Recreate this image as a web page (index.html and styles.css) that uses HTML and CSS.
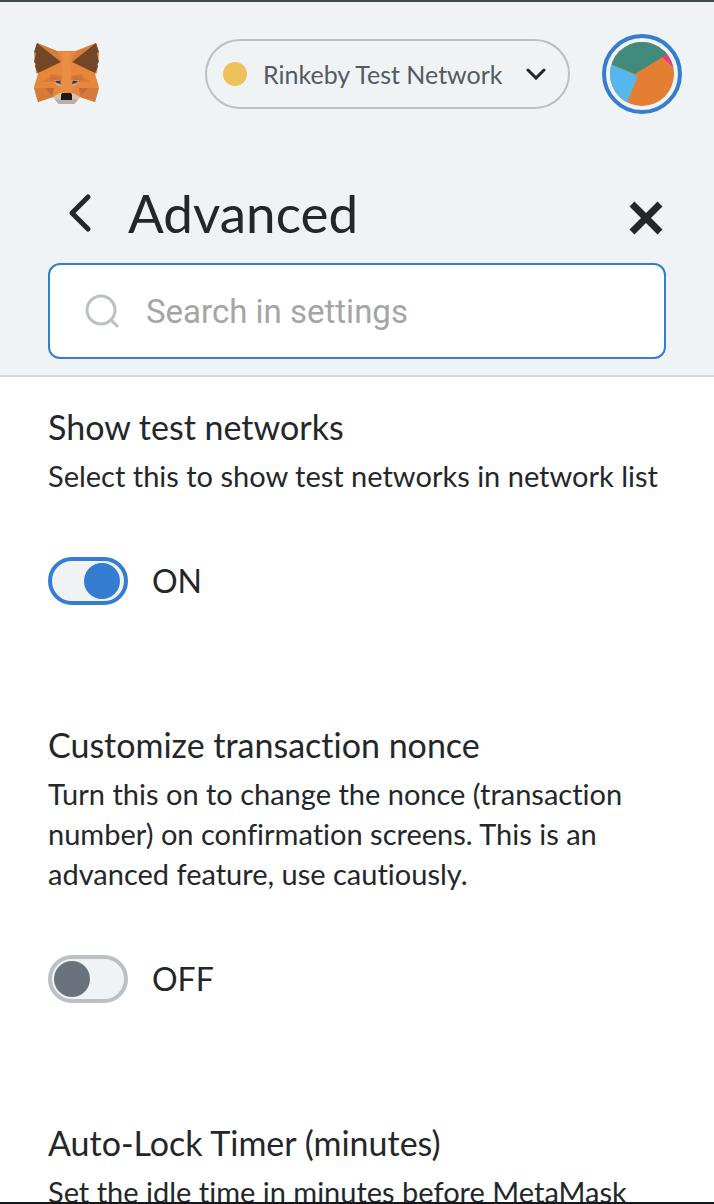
FILE: index.html
```html
<!DOCTYPE html>
<html lang="en">
<head>
<meta charset="utf-8">
<meta name="viewport" content="width=device-width, initial-scale=1">
<title>Advanced settings</title>
<link rel="stylesheet" href="styles.css">
</head>
<body>
<div class="app">
  <header class="top">
    <div class="app-bar">
      <a class="logo" href="#home" aria-label="Home">
        <svg viewBox="0 0 67 62" width="67" height="62" aria-hidden="true">
          <path fill="#e6873c" d="M4 0 24 8h19L63 0l3 10-2 20-2 1 4 13-4 15-15-5-6 7H26l-6-7-15 5-4-15 4-13-2-1L1 10z"/>
          <path fill="#d67a3a" d="M1 45h20l-1 9-15 5zM66 45H46l1 9 15 5z"/>
          <path fill="#d97b39" d="m4 0 20 8 5 11zM63 0 43 8l-5 11z"/>
          <path fill="#734626" d="M4 0 28 19 5 30l-1-2-1-2-1-3 1-2-2-2 2-9-2-1zM63 0 39 19l23 11 1-2 1-2 1-3-1-2 2-2-2-9 2-1z"/>
          <path fill="#e98e45" d="M29 9h9v24l2 17H27l2-17z"/>
          <path fill="#d4773a" d="m18 31-2 4 11 8 2-10zM49 31l2 4-11 8-2-10z"/>
          <path fill="#c66a38" d="m9 39 7-4 9-1 2 2-9 3zM58 39l-7-4-9-1-2 2 9 3z" opacity=".45"/>
          <path fill="#c5683a" d="M12 45h9l-2 8zM55 45h-9l2 8z"/>
          <path fill="#d9a27c" d="m21 37 6 1 1 6-5-2zM46 37l-6 1-1 6 5-2z"/>
          <path fill="#263c55" d="m22 38 5 0 1 3-4-1zM45 38l-5 0-1 3 4-1z"/>
          <path fill="#d6c1b3" d="m20 54 7-4h13l7 4-6 7H26z"/>
          <path fill="#bdaea3" d="m22 57 5-1h13l5 1-4 4H26z"/>
          <path fill="#17191b" d="m29 50h9l1 2v5H28v-5z"/>
        </svg>
      </a>
      <button class="network" type="button">
        <span class="network-dot"></span>
        <span class="network-name">Rinkeby Test Network</span>
        <svg viewBox="0 0 20 12" width="20" height="12" aria-hidden="true"><path d="m2 2 8 8 8-8" fill="none" stroke="#24272a" stroke-width="3" stroke-linecap="round"/></svg>
      </button>
      <button class="account" type="button" aria-label="Account">
        <svg viewBox="0 0 64 64" width="64" height="64" aria-hidden="true">
          <clipPath id="disc"><circle cx="32" cy="32" r="32"/></clipPath>
          <g clip-path="url(#disc)">
            <path fill="#e47e32" d="M0 0h64v64H0z"/>
            <path fill="#ec3a7e" d="M52 15 64 4v22z"/>
            <path fill="#418a7c" d="M0 0h64v8L25 32 0 22z"/>
            <path fill="#55b7ee" d="m0 22 28 12-14 33H0z"/>
          </g>
        </svg>
      </button>
    </div>
    <div class="heading">
      <button class="icon-button" type="button" aria-label="Back">
        <svg viewBox="0 0 24 40" width="24" height="40" aria-hidden="true"><path d="M20 4 4 20l16 16" fill="none" stroke="#24272a" stroke-width="5" stroke-linecap="round" stroke-linejoin="round"/></svg>
      </button>
      <h1 class="title">Advanced</h1>
      <button class="icon-button close" type="button" aria-label="Close">
        <svg viewBox="0 0 34 34" width="34" height="34" aria-hidden="true"><path d="m3 3 28 28M31 3 3 31" stroke="#24272a" stroke-width="7"/></svg>
      </button>
    </div>
    <label class="search">
      <svg viewBox="0 0 36 36" width="36" height="36" aria-hidden="true"><g fill="none" stroke="#bbc0c5" stroke-width="3" stroke-linecap="round"><circle cx="17" cy="17" r="14"/><path d="m27 27 6 6"/></g></svg>
      <input class="search-input" type="search" placeholder="Search in settings" aria-label="Search in settings">
    </label>
  </header>
  <main class="settings">
    <section class="setting">
      <h2 class="setting-title">Show test networks</h2>
      <p class="setting-text">Select this to show test networks in network list</p>
      <label class="toggle"><input class="switch" type="checkbox" role="switch" aria-label="Show test networks" checked><span>ON</span></label>
    </section>
    <section class="setting">
      <h2 class="setting-title">Customize transaction nonce</h2>
      <p class="setting-text">Turn this on to change the nonce (transaction number) on confirmation screens. This is an advanced feature, use cautiously.</p>
      <label class="toggle"><input class="switch" type="checkbox" role="switch" aria-label="Customize transaction nonce"><span>OFF</span></label>
    </section>
    <section class="setting">
      <h2 class="setting-title">Auto-Lock Timer (minutes)</h2>
      <p class="setting-text">Set the idle time in minutes before MetaMask</p>
    </section>
  </main>
</div>
</body>
</html>
```
FILE: styles.css
```css
* {
  box-sizing: border-box;
}

body {
  margin: 0;
  background: #fff;
  color: #24272a;
  font-family: Lato, "Open Sans", sans-serif;
  font-variant-ligatures: none;
}

button {
  padding: 0;
  border: 0;
  background: none;
  color: inherit;
  font: inherit;
}

svg {
  display: block;
  flex: none;
}

.app {
  display: flex;
  flex-direction: column;
  height: 100vh;
  overflow: hidden;
  border-top: 2px solid #3f4b50;
  border-bottom: 2px solid #141618;
}

.top {
  flex: none;
  padding: 32px 0 16px;
  background: #eff3f6;
  border-bottom: 2px solid #d6d9dc;
}

.app-bar {
  display: flex;
  align-items: center;
  gap: 32px;
  padding: 0 32px 0 33px;
}

.network {
  display: flex;
  align-items: center;
  width: 365px;
  height: 70px;
  margin-left: auto;
  padding: 0 22px 0 16px;
  border: 2px solid #bbc0c5;
  border-radius: 35px;
  color: #535a61;
  font-size: 25px;
}

.network-dot {
  width: 24px;
  height: 24px;
  border-radius: 50%;
  background: #edc25b;
}

.network-name {
  flex: 1;
  padding-left: 16px;
  text-align: left;
  white-space: nowrap;
}

.account {
  padding: 4px;
  border: 4px solid #347dd1;
  border-radius: 50%;
}

.heading {
  display: flex;
  align-items: center;
  padding: 65px 51px 16px 68px;
}

.title {
  flex: 1;
  margin: 0 0 0 36px;
  font-size: 53px;
  font-weight: 400;
  line-height: 68px;
}

.close {
  padding-top: 10px;
}

.search {
  display: flex;
  align-items: center;
  gap: 26px;
  height: 96px;
  margin: 0 48px;
  padding: 0 34px;
  border: 2px solid #347dd1;
  border-radius: 12px;
  background: #fff;
}

.search-input {
  flex: 1;
  min-width: 0;
  padding: 0;
  border: 0;
  outline: 0;
  background: none;
  font: 33px Roboto, sans-serif;
}

.search-input::placeholder {
  color: #a5a5a5;
  opacity: 1;
}

.settings {
  flex: 1;
  min-height: 0;
  overflow: hidden;
  padding: 27px 48px 0;
}

.setting {
  padding-bottom: 117px;
}

.setting-title {
  margin: 0;
  font-size: 34px;
  font-weight: 400;
  line-height: 46px;
}

.setting-text {
  margin: 6px 0 0;
  font-size: 29px;
  line-height: 40px;
}

.toggle {
  display: flex;
  align-items: center;
  gap: 24px;
  width: fit-content;
  margin-top: 61px;
  font-size: 32px;
  line-height: 48px;
}

.switch {
  display: flex;
  align-items: center;
  appearance: none;
  width: 80px;
  height: 48px;
  margin: 0;
  padding: 0 4px 0 2px;
  border: 4px solid #bbc0c5;
  border-radius: 24px;
  background: #eff3f6;
}

.switch::before {
  content: "";
  width: 36px;
  height: 36px;
  border-radius: 50%;
  background: #6a737d;
}

.switch:checked {
  justify-content: flex-end;
  border-color: #347dd1;
}

.switch:checked::before {
  background: #347dd1;
}
```
